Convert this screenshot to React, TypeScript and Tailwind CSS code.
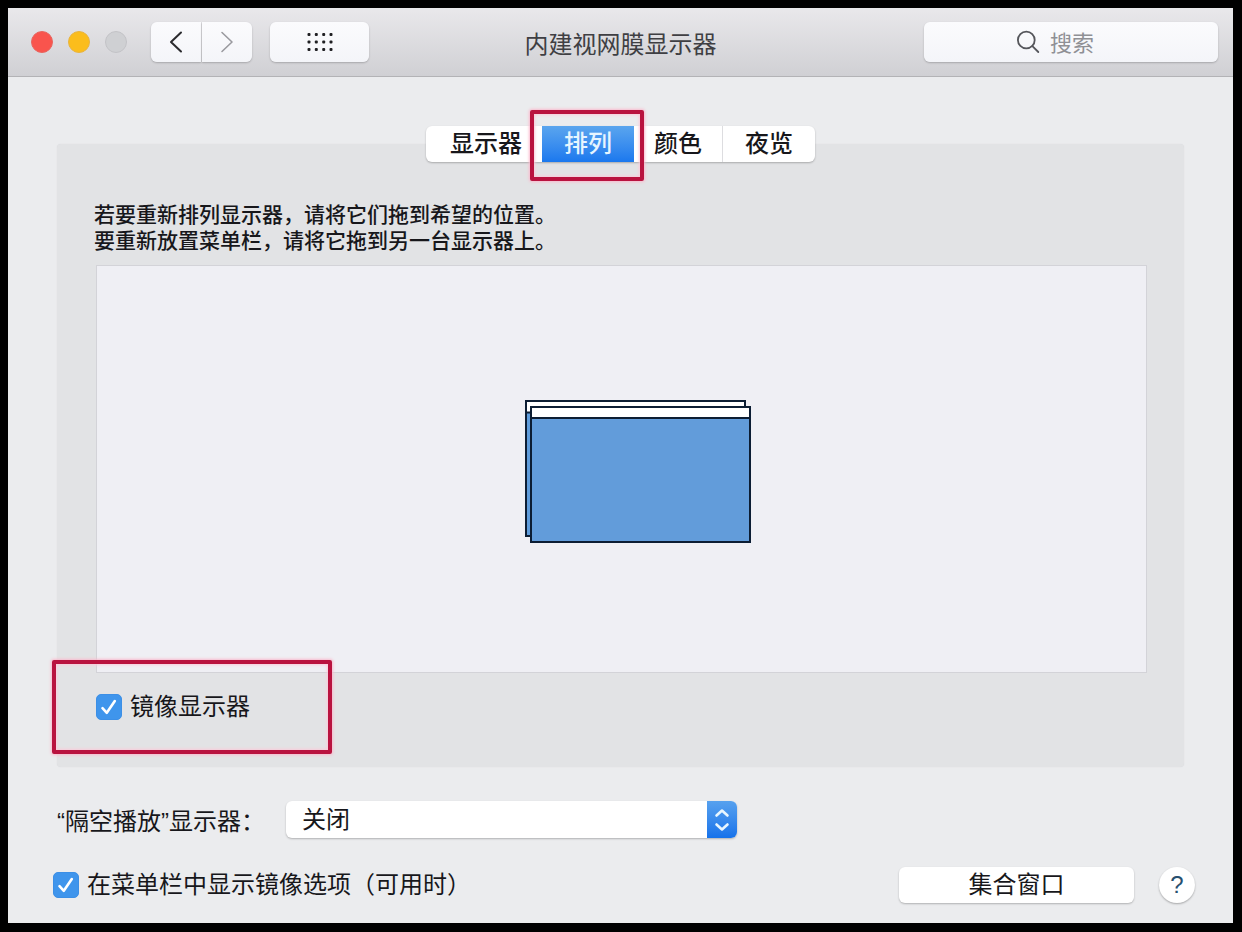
import type { ReactNode } from "react";

function Check({ id, children }: { id: string; children: ReactNode }) {
  return (
    <label htmlFor={id} className="flex items-center gap-2 text-2xl leading-[26px]">
      <span className="grid size-[26px] shrink-0">
        <input
          id={id}
          type="checkbox"
          defaultChecked
          className="peer col-start-1 row-start-1 size-[26px] appearance-none rounded-[5px] border border-gray-300 bg-white checked:border-[#3c8fe6] checked:bg-[#3f95ec]"
        />
        <svg
          viewBox="0 0 26 26"
          className="pointer-events-none col-start-1 row-start-1 hidden size-[26px] peer-checked:block"
          fill="none"
          stroke="white"
          strokeWidth="2.6"
          strokeLinecap="round"
          strokeLinejoin="round"
          aria-hidden="true"
        >
          <path d="M6.5 14.2 L10.8 18.8 L18.8 7" />
        </svg>
      </span>
      {children}
    </label>
  );
}

function Highlight({ className }: { className: string }) {
  return (
    <span
      aria-hidden="true"
      className={`pointer-events-none absolute rounded-xs border-4 border-[#b9133f] shadow-[0_0_3px_1px_#fbb9cc,inset_0_0_3px_1px_#fbc9d8] ${className}`}
    />
  );
}

function TitleBar() {
  const button =
    "flex h-10 items-center justify-center bg-linear-to-b from-[#fbfbfd] to-[#f4f5f9] shadow-[0_1px_2px_rgba(0,0,0,0.22)]";
  return (
    <header className="grid h-[69px] grid-cols-[1fr_auto_1fr] items-center border-b border-[#b3b3b6] bg-linear-to-b from-[#e9e8eb] to-[#d0d0d4] px-[15px]">
      <div className="flex items-center pl-2">
        <div className="flex gap-[15px]">
          <button aria-label="关闭" className="size-[22px] rounded-full border border-[#e8655f] bg-[#f9544d]" />
          <button aria-label="最小化" className="size-[22px] rounded-full border border-[#e8b440] bg-[#fbbd1c]" />
          <button aria-label="缩放" disabled className="size-[22px] rounded-full border border-[#c3c3c7] bg-[#cfd0d3]" />
        </div>
        <div className="ml-6 flex gap-px">
          <button aria-label="后退" className={`${button} w-[50px] rounded-l-md`}>
            <svg width="14" height="22" viewBox="0 0 14 22" fill="none" stroke="#2b2b2e" strokeWidth="2" strokeLinecap="round" strokeLinejoin="round">
              <path d="M12 1.5 L2 11 L12 20.5" />
            </svg>
          </button>
          <button aria-label="前进" className={`${button} w-[50px] rounded-r-md`}>
            <svg width="14" height="22" viewBox="0 0 14 22" fill="none" stroke="#9a9a9f" strokeWidth="1.6" strokeLinecap="round" strokeLinejoin="round">
              <path d="M2 1.5 L12 11 L2 20.5" />
            </svg>
          </button>
        </div>
        <button aria-label="显示全部" className={`${button} ml-[18px] w-[99px] rounded-md`}>
          <svg width="28" height="20" viewBox="0 0 28 20" fill="#1f1f22">
            {[2.5, 10, 17.5].map((y) =>
              [3, 10.3, 17.7, 25].map((x) => <rect key={`${x}-${y}`} x={x - 1.5} y={y - 1.5} width="3" height="3" rx="1" />),
            )}
          </svg>
        </button>
      </div>
      <h1 className="pt-1.5 text-2xl leading-8 text-[#3f3f43]">内建视网膜显示器</h1>
      <label className={`${button} w-[294px] gap-2.5 justify-self-end rounded-md pl-[92px]`}>
        <svg width="24" height="24" viewBox="0 0 24 24" fill="none" stroke="#55565b" strokeWidth="1.8" strokeLinecap="round" className="shrink-0" aria-hidden="true">
          <circle cx="10.3" cy="10" r="8.4" />
          <path d="M16.4 16.2 L22.3 22" />
        </svg>
        <input
          type="search"
          aria-label="搜索"
          placeholder="搜索"
          className="h-9 w-full min-w-0 bg-transparent pt-1 text-[22px] leading-8 outline-none placeholder:text-[#8f9095]"
        />
      </label>
    </header>
  );
}

function Tabs() {
  return (
    <div role="tablist" className="-mt-[18px] flex h-9 self-center rounded-md bg-white text-2xl leading-9 font-medium shadow-[0_1px_2px_rgba(0,0,0,0.25)]">
      <button role="tab" aria-selected="false" className="pr-5 pl-6">显示器</button>
      <button role="tab" aria-selected="true" className="relative bg-linear-to-b from-[#5aa5ee] to-[#1a78ee] px-[22px] text-[#e6f5ff]">
        排列
        <Highlight className="-top-4 -right-2.5 -bottom-[19px] -left-3" />
      </button>
      <button role="tab" aria-selected="false" className="px-5">颜色</button>
      <button role="tab" aria-selected="false" className="border-l border-[#dddde0] px-[22px]">夜览</button>
    </div>
  );
}

function Displays() {
  return (
    <svg width="226" height="143" viewBox="0 0 226 143" stroke="#0c1d33" strokeWidth="2" role="img" aria-label="镜像显示器">
      <rect x="1" y="1" width="219" height="135" fill="#5f9cdb" />
      <rect x="1" y="1" width="219" height="11.5" fill="#fff" />
      <rect x="6" y="7" width="219" height="135" fill="#629cda" />
      <rect x="6" y="7" width="219" height="11" fill="#fff" />
    </svg>
  );
}

export default function App() {
  return (
    <div className="flex min-h-screen bg-black pt-2 pr-[9px] pb-[9px] pl-2 font-['Liberation_Sans','Noto_Sans_CJK_SC',sans-serif] text-[#17171b]">
      <div className="flex min-w-0 flex-1 flex-col bg-[#ebecee]">
        <TitleBar />
        <main className="flex flex-1 flex-col px-[49px] pt-[67px] pb-5">
          <section className="flex flex-1 flex-col rounded-sm bg-[#e2e3e5] px-[37px] pb-[47px] shadow-[0_0_1px_#d4d5d8]">
            <Tabs />
            <p className="mt-10 text-[21px] leading-[26px] font-medium">
              若要重新排列显示器，请将它们拖到希望的位置。
              <br />
              要重新放置菜单栏，请将它拖到另一台显示器上。
            </p>
            <div className="mt-[11px] ml-[2px] flex min-h-[240px] flex-1 items-center justify-center border border-[#d3d3d8] bg-[#efeff4] pt-1 pl-8">
              <Displays />
            </div>
            <div className="relative mt-[21px] ml-[2px] self-start">
              <Check id="mirror">镜像显示器</Check>
              <Highlight className="-top-[34px] -right-[82px] -bottom-[34px] -left-11" />
            </div>
          </section>
          <div className="mt-[34px] flex items-center gap-[21px] text-2xl">
            <label htmlFor="airplay" className="shrink-0 pt-1">“隔空播放”显示器：</label>
            <div className="relative min-w-0 max-w-[451px] flex-1">
              <select
                id="airplay"
                className="block h-[37px] w-full appearance-none rounded-md bg-white pr-10 pl-4 leading-9 shadow-[0_1px_2px_rgba(0,0,0,0.25)]"
              >
                <option>关闭</option>
              </select>
              <span className="pointer-events-none absolute inset-y-0 right-0 flex w-[30px] items-center justify-center rounded-r-md bg-linear-to-b from-[#57a1ee] to-[#1572ea]">
                <svg width="16" height="24" viewBox="0 0 16 24" fill="none" stroke="#e8f6ff" strokeWidth="2.6" strokeLinecap="round" strokeLinejoin="round" aria-hidden="true">
                  <path d="M2.5 7.5 L8 2.5 L13.5 7.5 M2.5 16.5 L8 21.5 L13.5 16.5" />
                </svg>
              </span>
            </div>
          </div>
          <div className="-mx-1 mt-[29px] flex items-center">
            <Check id="menubar">在菜单栏中显示镜像选项（可用时）</Check>
            <button className="ml-auto h-9 w-[235px] rounded-md bg-white text-2xl leading-9 shadow-[0_1px_2px_rgba(0,0,0,0.25)]">集合窗口</button>
            <button aria-label="帮助" className="mr-[-7px] ml-[25px] size-9 rounded-full bg-white text-2xl leading-9 text-[#27506f] shadow-[0_1px_2px_rgba(0,0,0,0.3)]">
              ?
            </button>
          </div>
        </main>
      </div>
    </div>
  );
}
